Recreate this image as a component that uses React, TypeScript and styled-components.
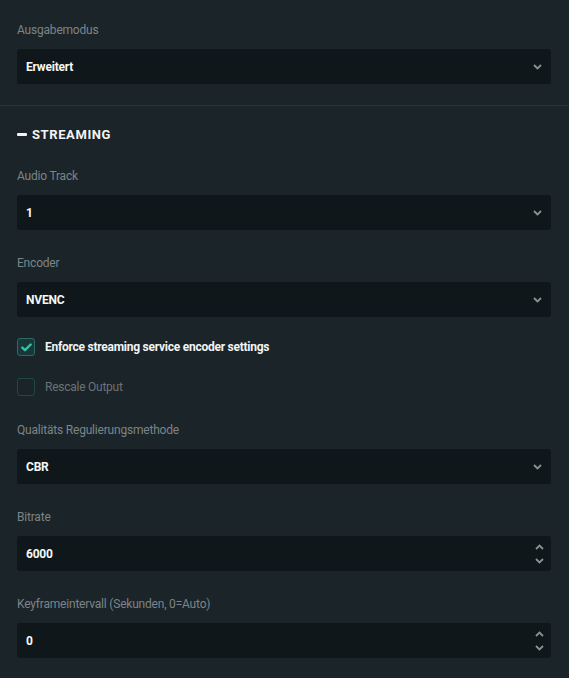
import React, { useState } from "react";
import styled, { createGlobalStyle } from "styled-components";

const GlobalStyle = createGlobalStyle`
  html, body {
    margin: 0;
    padding: 0;
    background: #1b2428;
  }
  body {
    font-family: Roboto, "Liberation Sans", sans-serif;
    -webkit-font-smoothing: antialiased;
  }
`;

const Page = styled.div`
  width: 569px;
  min-height: 678px;
  background: #1b2428;
  overflow: hidden;
`;

const Section = styled.div<{ $divider?: boolean }>`
  display: flex;
  flex-direction: column;
  gap: 25px;
  padding: ${(p) => (p.$divider ? "20px 18px 0 17px" : "22px 18px 21px 17px")};
  border-top: ${(p) => (p.$divider ? "1px solid #2a3338" : "none")};
`;

const SectionTitle = styled.div`
  display: flex;
  align-items: center;
  gap: 5px;
  height: 16px;
  color: #f2f4f5;
  font-size: 13px;
  font-weight: 700;
  letter-spacing: 0.6px;
  margin-bottom: 1px;
`;

const Dash = styled.span`
  width: 10px;
  height: 3px;
  background: #f2f4f5;
  border-radius: 1px;
`;

const Field = styled.div`
  display: flex;
  flex-direction: column;
  gap: 11px;
`;

const Label = styled.label`
  font-size: 12px;
  line-height: 16px;
  letter-spacing: -0.2px;
  color: #7c8488;
`;

const Box = styled.div`
  height: 35px;
  background: #10171b;
  border-radius: 3px;
  display: flex;
  align-items: center;
  justify-content: space-between;
  padding: 0 9px 0 9px;
  box-sizing: border-box;
  color: #f5f7f8;
  font-size: 12px;
  font-weight: 700;
  letter-spacing: -0.2px;
`;

const Arrows = styled.div`
  display: flex;
  flex-direction: column;
  gap: 8px;
  margin-right: -2px;
`;

const CheckRow = styled.div<{ $on: boolean }>`
  display: flex;
  align-items: center;
  gap: 10px;
  font-size: 12px;
  letter-spacing: -0.25px;
  font-weight: ${(p) => (p.$on ? 700 : 400)};
  color: ${(p) => (p.$on ? "#f2f4f5" : "#6b7377")};
  cursor: pointer;
`;

const CheckGroup = styled.div`
  display: flex;
  flex-direction: column;
  gap: 22px;
  margin-top: -4px;
  margin-bottom: 1px;
`;

const CheckBox = styled.span<{ $on: boolean }>`
  width: 18px;
  height: 18px;
  box-sizing: border-box;
  border-radius: 3px;
  border: 1px solid ${(p) => (p.$on ? "#2c6b5f" : "#1f4a44")};
  background: ${(p) => (p.$on ? "#17373a" : "transparent")};
  display: flex;
  align-items: center;
  justify-content: center;
`;

const Chevron = ({ up }: { up?: boolean }) => (
  <svg width="9" height="6" viewBox="0 0 9 6">
    <path
      d={up ? "M1 5 L4.5 1.5 L8 5" : "M1 1 L4.5 4.5 L8 1"}
      fill="none"
      stroke="#8a9195"
      strokeWidth="1.8"
    />
  </svg>
);

const Select = ({ label, value }: { label: string; value: string }) => (
  <Field>
    <Label>{label}</Label>
    <Box>
      <span>{value}</span>
      <Chevron />
    </Box>
  </Field>
);

const NumberInput = ({ label, value }: { label: string; value: string }) => (
  <Field>
    <Label>{label}</Label>
    <Box>
      <span>{value}</span>
      <Arrows>
        <Chevron up />
        <Chevron />
      </Arrows>
    </Box>
  </Field>
);

const Check = ({ label, initial }: { label: string; initial: boolean }) => {
  const [on, setOn] = useState(initial);
  return (
    <CheckRow $on={on} onClick={() => setOn(!on)}>
      <CheckBox $on={on}>
        {on && (
          <svg width="11" height="9" viewBox="0 0 11 9">
            <path
              d="M1.3 4.6 L4 7.2 L9.7 1.5"
              fill="none"
              stroke="#31c3a2"
              strokeWidth="2.4"
              strokeLinecap="round"
              strokeLinejoin="round"
            />
          </svg>
        )}
      </CheckBox>
      {label}
    </CheckRow>
  );
};

export default function App() {
  return (
    <Page>
      <GlobalStyle />
      <Section>
        <Select label="Ausgabemodus" value="Erweitert" />
      </Section>
      <Section $divider>
        <SectionTitle>
          <Dash />
          STREAMING
        </SectionTitle>
        <Select label="Audio Track" value="1" />
        <Select label="Encoder" value="NVENC" />
        <CheckGroup>
          <Check label="Enforce streaming service encoder settings" initial={true} />
          <Check label="Rescale Output" initial={false} />
        </CheckGroup>
        <Select label="Qualitäts Regulierungsmethode" value="CBR" />
        <NumberInput label="Bitrate" value="6000" />
        <NumberInput label="Keyframeintervall (Sekunden, 0=Auto)" value="0" />
      </Section>
    </Page>
  );
}
